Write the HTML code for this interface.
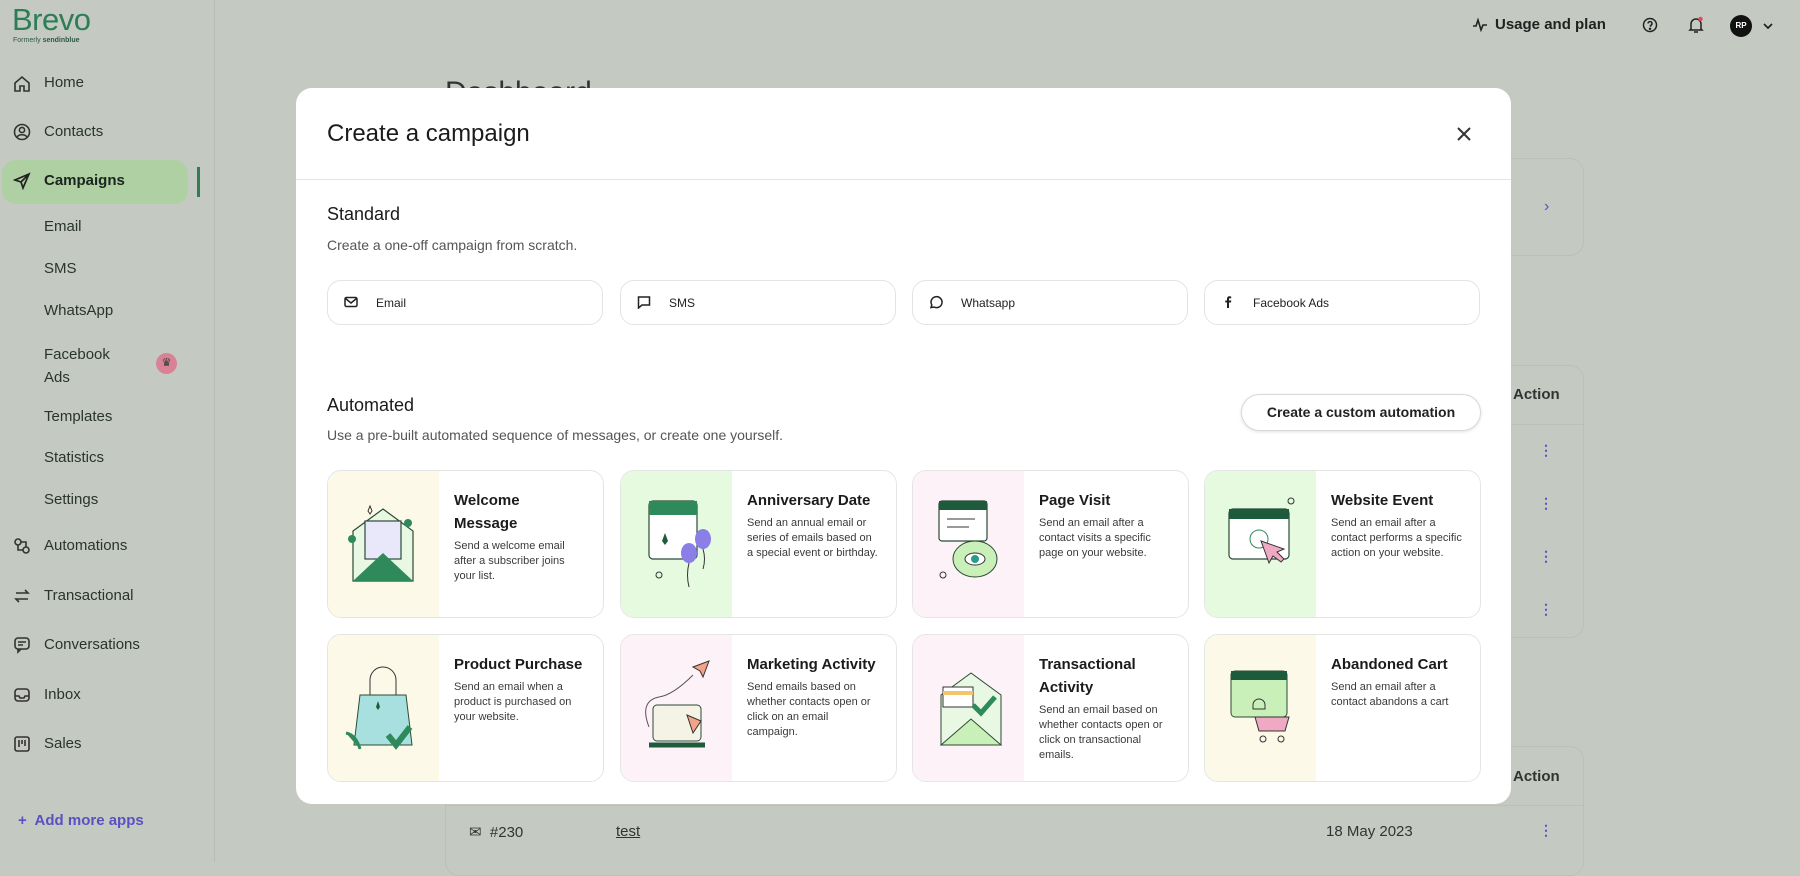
<!DOCTYPE html>
<html><head><meta charset="utf-8"><style>
*{box-sizing:border-box;margin:0;padding:0}
body{width:1800px;height:862px;overflow:hidden;background:#c4cac1;font-family:"Liberation Sans",sans-serif;position:relative;color:#1f2d24}
.a{position:absolute}
.side{left:0;top:0;width:215px;height:862px;border-right:1px solid #b6bdb3}
.nav{position:absolute;left:44px;font-size:15px;color:#2a342d;white-space:nowrap}
.ic{position:absolute;left:13px;width:18px;height:18px}
.modal{left:296px;top:88px;width:1215px;height:716px;background:#fff;border-radius:16px;overflow:hidden}
.btn{position:absolute;top:192px;width:276px;height:45px;border:1px solid #e2e4e2;border-radius:14px;font-size:12px;color:#222;display:flex;align-items:center;padding-left:48px}
.btn svg{position:absolute;left:16px;top:14px}
.card{position:absolute;width:277px;height:148px;border:1px solid #e4e6e4;border-radius:14px;overflow:hidden;background:#fff}
.card .p{position:absolute;left:0;top:0;width:111px;height:100%}
.card h4{position:absolute;left:126px;top:18px;width:145px;font-size:15px;line-height:23px;font-weight:bold;color:#1b1b1b}
.card p{font-size:11px;line-height:15px;color:#3a3a3a;font-weight:normal;margin-top:4px;width:132px}
.card svg{position:absolute;left:10px;top:20px}
.y{background:#fcf9e8}.g{background:#e5fade}.k{background:#fdf2f8}
</style></head><body>
<div class="a side">
 <div class="a" style="left:12px;top:2px;font-size:31px;color:#2e7d55;letter-spacing:-0.5px">Brevo</div>
 <div class="a" style="left:13px;top:37px;font-size:7px;color:#2e5a40">Formerly <b>sendinblue</b></div>
 <div class="a" style="left:2px;top:160px;width:186px;height:44px;background:#aed0a3;border-radius:14px"></div>
 <div class="a" style="left:197px;top:167px;width:3px;height:30px;background:#2e7d55"></div>
 <svg class="ic" style="top:75px" viewBox="0 0 18 18" fill="none" stroke="#333" stroke-width="1.6"><path d="M2 8l7-6 7 6v8H11v-5H7v5H2z"/></svg>
 <div class="nav" style="top:74px">Home</div>
 <svg class="ic" style="top:123px" viewBox="0 0 18 18" fill="none" stroke="#333" stroke-width="1.6"><circle cx="9" cy="9" r="7.5"/><circle cx="9" cy="7" r="2.6"/><path d="M4 14c2-3 8-3 10 0"/></svg>
 <div class="nav" style="top:123px">Contacts</div>
 <svg class="ic" style="top:172px" viewBox="0 0 18 18" fill="none" stroke="#222" stroke-width="1.7"><path d="M16 2L2 8l6 2 2 6z M8 10l8-8"/></svg>
 <div class="nav" style="top:172px;font-weight:bold;color:#1b241e">Campaigns</div>
 <div class="nav" style="top:218px">Email</div>
 <div class="nav" style="top:260px">SMS</div>
 <div class="nav" style="top:302px">WhatsApp</div>
 <div class="nav" style="top:343px;line-height:23px">Facebook<br>Ads</div>
 <div class="a" style="left:156px;top:353px;width:21px;height:21px;border-radius:50%;background:#d98296;color:#333;font-size:11px;text-align:center;line-height:21px">♛</div>
 <div class="nav" style="top:408px">Templates</div>
 <div class="nav" style="top:449px">Statistics</div>
 <div class="nav" style="top:491px">Settings</div>
 <svg class="ic" style="top:537px" viewBox="0 0 18 18" fill="none" stroke="#333" stroke-width="1.6"><circle cx="5" cy="5" r="3"/><circle cx="13" cy="13" r="3"/><path d="M5 8v5h5M8 5h5v5"/></svg>
 <div class="nav" style="top:537px">Automations</div>
 <svg class="ic" style="top:587px" viewBox="0 0 18 18" fill="none" stroke="#333" stroke-width="1.6"><path d="M3 6h12l-3-3M15 12H3l3 3"/></svg>
 <div class="nav" style="top:587px">Transactional</div>
 <svg class="ic" style="top:636px" viewBox="0 0 18 18" fill="none" stroke="#333" stroke-width="1.6"><rect x="2" y="2" width="14" height="11" rx="3"/><path d="M5 13v3l3-3M5 6h8M5 9h5"/></svg>
 <div class="nav" style="top:636px">Conversations</div>
 <svg class="ic" style="top:686px" viewBox="0 0 18 18" fill="none" stroke="#333" stroke-width="1.6"><rect x="2" y="3" width="14" height="12" rx="3"/><path d="M2 10h4l1 2h4l1-2h4"/></svg>
 <div class="nav" style="top:686px">Inbox</div>
 <svg class="ic" style="top:735px" viewBox="0 0 18 18" fill="none" stroke="#333" stroke-width="1.6"><rect x="2" y="2" width="14" height="14" rx="2"/><path d="M6 5v7M9 5v4M12 5v6"/></svg>
 <div class="nav" style="top:735px">Sales</div>
 <div class="a" style="left:18px;top:812px;font-size:15px;color:#5b4fc4;font-weight:bold">+&nbsp; Add more apps</div>
</div>

<div class="a" style="left:445px;top:76px;font-size:30px;color:#333">Dashboard</div>
<div class="a" style="left:1480px;top:158px;width:104px;height:98px;border:1px solid #b9c0b6;border-radius:14px"></div>
<div class="a" style="left:1544px;top:198px;color:#5b4fc4;font-size:16px">›</div>
<div class="a" style="left:1480px;top:365px;width:104px;height:273px;border:1px solid #b9c0b6;border-radius:14px"></div>
<div class="a" style="left:1480px;top:424px;width:104px;border-top:1px solid #b9c0b6"></div>
<div class="a" style="left:1513px;top:386px;font-size:15px;font-weight:bold;color:#333">Action</div>
<div class="a" style="left:445px;top:746px;width:1139px;height:130px;border:1px solid #b9c0b6;border-radius:14px"></div>
<div class="a" style="left:445px;top:805px;width:1139px;border-top:1px solid #b9c0b6"></div>
<div class="a" style="left:1513px;top:768px;font-size:15px;font-weight:bold;color:#333">Action</div>
<div class="a" style="left:469px;top:823px;font-size:15px;color:#333">✉&nbsp; #230</div>
<div class="a" style="left:616px;top:823px;font-size:15px;color:#333;text-decoration:underline">test</div>
<div class="a" style="left:1326px;top:823px;font-size:15px;color:#333">18 May 2023</div>
<div class="a" style="left:1539px;top:424px;color:#5b4fc4;font-size:14px;line-height:53px;font-weight:bold">⋮<br>⋮<br>⋮<br>⋮</div>
<div class="a" style="left:1539px;top:822px;color:#5b4fc4;font-size:14px;font-weight:bold">⋮</div>

<svg class="a" style="left:1472px;top:17px" width="16" height="16" viewBox="0 0 16 16" fill="none" stroke="#222" stroke-width="1.6"><path d="M1 9h3l2-6 3 10 2-5h4"/></svg>
<div class="a" style="left:1495px;top:16px;font-size:15px;font-weight:bold;color:#222">Usage and plan</div>
<svg class="a" style="left:1642px;top:17px" width="16" height="16" viewBox="0 0 16 16" fill="none" stroke="#222" stroke-width="1.5"><circle cx="8" cy="8" r="6.5"/><path d="M6 6.5a2 2 0 1 1 2.5 2v1.2"/><circle cx="8" cy="11.8" r=".5" fill="#222"/></svg>
<svg class="a" style="left:1688px;top:16px" width="16" height="18" viewBox="0 0 16 18" fill="none" stroke="#222" stroke-width="1.5"><path d="M3 13V8a5 5 0 0 1 10 0v5l1 1H2zM6 16h4"/><circle cx="12.5" cy="3" r="2.2" fill="#e04a5a" stroke="none"/></svg>
<div class="a" style="left:1730px;top:15px;width:22px;height:22px;border-radius:50%;background:#111;color:#fff;font-size:8px;font-weight:bold;text-align:center;line-height:22px">RP</div>
<svg class="a" style="left:1762px;top:21px" width="12" height="10" viewBox="0 0 12 10" fill="none" stroke="#222" stroke-width="1.7"><path d="M2 3l4 4 4-4"/></svg>

<div class="a modal">
 <div class="a" style="left:31px;top:32px;font-size:24px;color:#1b1b1b">Create a campaign</div>
 <svg class="a" style="left:1160px;top:38px" width="16" height="16" viewBox="0 0 16 16" stroke="#333" stroke-width="2"><path d="M2 2l12 12M14 2L2 14"/></svg>
 <div class="a" style="left:0;top:91px;width:1215px;border-top:1px solid #e4e4e4"></div>
 <div class="a" style="left:31px;top:116px;font-size:18px;color:#1b1b1b">Standard</div>
 <div class="a" style="left:31px;top:149px;font-size:14px;color:#555">Create a one-off campaign from scratch.</div>
 <div class="btn" style="left:31px"><svg width="14" height="14" viewBox="0 0 14 14" fill="none" stroke="#222" stroke-width="1.5"><rect x="1" y="2.5" width="12" height="9" rx="1.5"/><path d="M1.5 3.5L7 8l5.5-4.5"/></svg>Email</div>
 <div class="btn" style="left:324px"><svg width="14" height="14" viewBox="0 0 14 14" fill="none" stroke="#222" stroke-width="1.5"><path d="M1.5 2h11v8H5l-3.5 3z"/></svg>SMS</div>
 <div class="btn" style="left:616px"><svg width="14" height="14" viewBox="0 0 14 14" fill="none" stroke="#222" stroke-width="1.5"><path d="M2 12.5l.8-2.6A5.5 5.5 0 1 1 5 12z"/></svg>Whatsapp</div>
 <div class="btn" style="left:908px"><svg width="14" height="14" viewBox="0 0 14 14" fill="#222"><path d="M8 13V7.5h2l.3-2H8V4.3c0-.6.2-1 1-1h1.2V1.5C9.8 1.4 9.2 1.3 8.6 1.3 6.9 1.3 6 2.3 6 4v1.5H4.3v2H6V13z"/></svg>Facebook Ads</div>
 <div class="a" style="left:31px;top:307px;font-size:18px;color:#1b1b1b">Automated</div>
 <div class="a" style="left:31px;top:339px;font-size:14px;color:#555">Use a pre-built automated sequence of messages, or create one yourself.</div>
 <div class="a" style="left:945px;top:306px;width:240px;height:37px;border:1px solid #d8d8d8;border-radius:19px;box-shadow:0 1px 3px rgba(0,0,0,.12);font-size:14px;font-weight:bold;color:#222;text-align:center;line-height:35px">Create a custom automation</div>

 <div class="card" style="left:31px;top:382px"><div class="p y"></div>
  <svg width="90" height="110" viewBox="0 0 90 110"><path d="M15 40l30-22 30 22v50H15z" fill="#e8f8e2" stroke="#2a4a36" stroke-width="1.2"/><rect x="27" y="30" width="36" height="38" fill="#e9e8fb" stroke="#2a4a36" stroke-width="1.2"/><path d="M15 90l30-28 30 28z" fill="#2e8a5a"/><circle cx="14" cy="48" r="4" fill="#2e8a5a"/><circle cx="70" cy="32" r="4" fill="#2e8a5a"/><path d="M30 20l2-5 2 5-2 3z" fill="none" stroke="#333"/></svg>
  <h4>Welcome<br>Message<p>Send a welcome email after a subscriber joins your list.</p></h4></div>
 <div class="card" style="left:324px;top:382px"><div class="p g"></div>
  <svg width="90" height="110" viewBox="0 0 90 110"><rect x="18" y="10" width="48" height="58" rx="4" fill="#fff" stroke="#2a4a36" stroke-width="1.2"/><rect x="18" y="10" width="48" height="14" fill="#2e8a5a"/><path d="M31 50l3-8 3 8-3 4z" fill="#1e5a3c"/><ellipse cx="72" cy="48" rx="8" ry="10" fill="#8b7ee6"/><ellipse cx="58" cy="62" rx="8" ry="10" fill="#8b7ee6"/><path d="M58 72q-3 12 0 24M72 58q3 10 0 20" stroke="#333" fill="none"/><circle cx="28" cy="84" r="3" fill="none" stroke="#333"/></svg>
  <h4>Anniversary Date<p>Send an annual email or series of emails based on a special event or birthday.</p></h4></div>
 <div class="card" style="left:616px;top:382px"><div class="p k"></div>
  <svg width="90" height="110" viewBox="0 0 90 110"><rect x="16" y="10" width="48" height="40" rx="3" fill="#fff" stroke="#2a4a36" stroke-width="1.2"/><rect x="16" y="10" width="48" height="9" fill="#1e5a3c"/><path d="M24 28h28M24 36h22" stroke="#333"/><ellipse cx="52" cy="68" rx="22" ry="18" fill="#c9f0b8" stroke="#2a4a36"/><ellipse cx="52" cy="68" rx="10" ry="6" fill="#fff" stroke="#333"/><circle cx="52" cy="68" r="4" fill="#2a9a8a"/><circle cx="20" cy="84" r="3" fill="none" stroke="#333"/></svg>
  <h4>Page Visit<p>Send an email after a contact visits a specific page on your website.</p></h4></div>
 <div class="card" style="left:908px;top:382px"><div class="p g"></div>
  <svg width="90" height="110" viewBox="0 0 90 110"><rect x="14" y="18" width="60" height="50" rx="4" fill="#fff" stroke="#2a4a36" stroke-width="1.2"/><rect x="14" y="18" width="60" height="10" fill="#1e5a3c"/><circle cx="44" cy="48" r="9" fill="none" stroke="#2e8a5a"/><path d="M46 50l8 22 4-7 8 6 3-3-7-7 7-3z" fill="#f0a9c3" stroke="#333"/><circle cx="76" cy="10" r="3" fill="none" stroke="#333"/></svg>
  <h4>Website Event<p>Send an email after a contact performs a specific action on your website.</p></h4></div>

 <div class="card" style="left:31px;top:546px"><div class="p y"></div>
  <svg width="90" height="110" viewBox="0 0 90 110"><path d="M32 40V25a13 13 0 0 1 26 0v15" fill="none" stroke="#333"/><path d="M22 40h46l6 50H16z" fill="#a8e0e0" stroke="#2a4a36"/><path d="M38 52l2-6 2 6-2 3z" fill="#1e5a3c"/><path d="M50 80l8 10 14-18" stroke="#2e8a5a" stroke-width="6" fill="none"/><path d="M8 78q10 2 14 16" fill="#2e8a5a" stroke="#2e8a5a" stroke-width="3"/></svg>
  <h4>Product Purchase<p>Send an email when a product is purchased on your website.</p></h4></div>
 <div class="card" style="left:324px;top:546px"><div class="p k"></div>
  <svg width="90" height="110" viewBox="0 0 90 110"><rect x="22" y="50" width="48" height="36" rx="4" fill="#f4f3e6" stroke="#2a4a36"/><path d="M18 90h56" stroke="#1e5a3c" stroke-width="5"/><path d="M56 60l14 6-8 12z" fill="#f2a389" stroke="#333"/><path d="M62 12l16-6-6 16-3-6z" fill="#f2a389" stroke="#333"/><path d="M62 20q-20 20-34 22q-20 4-10 30" fill="none" stroke="#555"/></svg>
  <h4>Marketing Activity<p>Send emails based on whether contacts open or click on an email campaign.</p></h4></div>
 <div class="card" style="left:616px;top:546px"><div class="p k"></div>
  <svg width="90" height="110" viewBox="0 0 90 110"><path d="M18 40l30-22 30 22v50H18z" fill="#e8f8e2" stroke="#2a4a36"/><rect x="20" y="32" width="30" height="20" fill="#fff" stroke="#333"/><rect x="20" y="36" width="30" height="4" fill="#f2c56b"/><path d="M18 90l30-26 30 26z" fill="#c9f0b8" stroke="#2a4a36"/><path d="M50 50l8 8 14-16" stroke="#2e8a5a" stroke-width="5" fill="none"/></svg>
  <h4>Transactional Activity<p>Send an email based on whether contacts open or click on transactional emails.</p></h4></div>
 <div class="card" style="left:908px;top:546px"><div class="p y"></div>
  <svg width="90" height="110" viewBox="0 0 90 110"><rect x="16" y="16" width="56" height="46" rx="4" fill="#c9f0b8" stroke="#2a4a36"/><rect x="16" y="16" width="56" height="9" fill="#1e5a3c"/><path d="M38 50a6 6 0 0 1 12 0v4H38z" fill="none" stroke="#333"/><path d="M40 62h34l-4 14H44z" fill="#f0a9c3" stroke="#333"/><circle cx="48" cy="84" r="3" fill="none" stroke="#333"/><circle cx="66" cy="84" r="3" fill="none" stroke="#333"/></svg>
  <h4>Abandoned Cart<p>Send an email after a contact abandons a cart</p></h4></div>
</div>
</body></html>
